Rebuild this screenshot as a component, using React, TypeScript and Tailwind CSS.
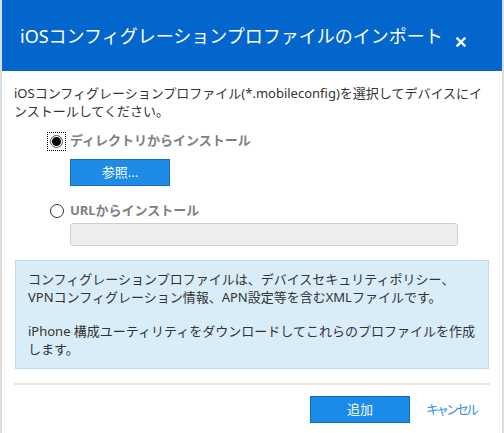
import React from 'react';

const font = { fontFamily: '"Noto Sans", "Noto Sans CJK JP", sans-serif' };

const CloseIcon: React.FC = () => (
  <svg width="10" height="10" viewBox="0 0 10 10" className="text-white">
    <path d="M1.5 1.5 L8.5 8.5 M8.5 1.5 L1.5 8.5" stroke="currentColor" strokeWidth="2.4" strokeLinecap="square" />
  </svg>
);

const Radio: React.FC<{ checked?: boolean }> = ({ checked }) =>
  checked ? (
    <span className="w-[19px] h-[19px] border border-dotted border-black flex items-center justify-center">
      <span className="w-[13px] h-[13px] rounded-full border border-[#555] bg-white flex items-center justify-center">
        <span className="w-[9px] h-[9px] rounded-full bg-black" />
      </span>
    </span>
  ) : (
    <span className="w-[19px] h-[19px] flex items-center justify-center">
      <span className="w-[14px] h-[14px] rounded-full border border-[#333] bg-white" />
    </span>
  );

const ImportProfileDialog: React.FC = () => {
  return (
    <div className="w-[504px] h-[433px] overflow-hidden bg-[#dcdcdc] px-[2px]" style={font}>
      <div className="h-full bg-white">
        <div className="h-[71px] bg-[#0366cd] flex items-center pl-[18px] pr-[36px] justify-between">
          <h1 className="text-[18px] text-white leading-none">
            iOSコンフィグレーションプロファイルのインポート
          </h1>
          <span className="mt-[12px]">
            <CloseIcon />
          </span>
        </div>

        <div className="px-[12px] pt-[13px]">
          <p className="text-[13px] leading-[18px] text-[#333] whitespace-nowrap">
            iOSコンフィグレーションプロファイル(*.mobileconfig)を選択してデバイスにイ
            <br />
            ンストールしてください。
          </p>

          <div className="pl-[33px] mt-[11px]">
            <label className="flex items-center gap-[4px] h-[20px]">
              <Radio checked />
              <span className="text-[13px] font-bold text-[#808080]">ディレクトリからインストール</span>
            </label>
            <button className="ml-[23px] mt-[8px] w-[100px] h-[27px] bg-[#1e8be6] border border-[#0e6cc4] text-white text-[13px]">
              参照...
            </button>

            <label className="flex items-center gap-[4px] h-[20px] mt-[15px]">
              <Radio />
              <span className="text-[13px] font-bold text-[#808080]">URLからインストール</span>
            </label>
            <div className="ml-[23px] mt-[2px] w-[388px] h-[23px] bg-[#eeeeee] border border-[#cfcfcf] rounded-[3px]" />
          </div>

          <div className="mt-[14px] ml-[1px] w-[474px] bg-[#d9edf8] border border-[#bcdcec] pl-[12px] pr-[8px] pt-[9px] pb-[10px] text-[13px] leading-[18px] text-[#333]">
            <p className="whitespace-nowrap">
              コンフィグレーションプロファイルは、デバイスセキュリティポリシー、
              <br />
              VPNコンフィグレーション情報、APN設定等を含むXMLファイルです。
            </p>
            <p className="mt-[16px] whitespace-nowrap">
              iPhone 構成ユーティリティをダウンロードしてこれらのプロファイルを作成
              <br />
              します。
            </p>
          </div>

          <div className="mt-[14px] h-[2px] bg-[#e6e6e6]" />

          <div className="flex items-center justify-end mt-[11px] pr-[14px]">
            <button className="w-[100px] h-[27px] bg-[#1a8be8] border border-[#0b69c2] text-white text-[13px]">
              追加
            </button>
            <button className="ml-[16px] text-[13px] tracking-[-3px] text-[#3b8ede]">キャンセル</button>
          </div>
        </div>
      </div>
    </div>
  );
};

export default function App() {
  return <ImportProfileDialog />;
}
